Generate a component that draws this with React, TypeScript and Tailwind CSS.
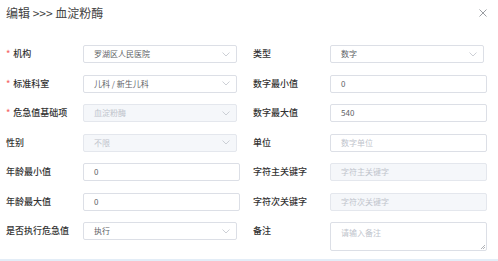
import React from 'react';

const font = { fontFamily: '"Noto Sans CJK SC", "Noto Sans", sans-serif' };

const Chevron: React.FC = () => (
  <svg width="8" height="5" viewBox="0 0 8 5" className="text-[#c0c4cc]">
    <path d="M0.5 0.5 L4 4 L7.5 0.5" fill="none" stroke="currentColor" strokeWidth="0.8" />
  </svg>
);

type Field = {
  label: string;
  required?: boolean;
  kind: 'select' | 'input' | 'textarea';
  value?: string;
  placeholder?: string;
  disabled?: boolean;
};

const Control: React.FC<{ f: Field }> = ({ f }) => {
  const base = 'flex items-center rounded-[2px] border pl-[10px] pr-[6px] text-[8px]';
  const tone = f.disabled ? 'bg-[#f5f7fa] border-[#e4e7ed]' : 'bg-white border-[#dcdfe6]';
  const textCls = f.value ? (f.disabled ? 'text-[#c0c4cc]' : 'text-[#606266]') : 'text-[#c0c4cc]';
  if (f.kind === 'select') {
    return (
      <div className={`${base} ${tone} h-[18px] w-[154px] justify-between`}>
        <span className={textCls}>{f.value}</span>
        <Chevron />
      </div>
    );
  }
  if (f.kind === 'textarea') {
    return (
      <div className={`relative rounded-[2px] border pl-[10px] pt-[4px] text-[8px] ${tone} h-[29px] w-[157px]`}>
        <span className={textCls}>{f.value || f.placeholder}</span>
        <svg width="5" height="5" viewBox="0 0 5 5" className="absolute bottom-[1px] right-[1px]">
          <path d="M1 5 L5 1 M3 5 L5 3" stroke="#909399" strokeWidth="0.7" />
        </svg>
      </div>
    );
  }
  return (
    <div className={`${base} ${tone} h-[18px] w-[157px]`}>
      <span className={textCls}>{f.value || f.placeholder}</span>
    </div>
  );
};

const Row: React.FC<{ f: Field }> = ({ f }) => (
  <div className="flex items-start">
    <div className="flex h-[18px] w-[77px] items-center text-[9px] font-medium text-[#333]">
      {f.required && <span className="mr-[3px] text-[#f56c6c]">*</span>}
      {f.label}
    </div>
    <Control f={f} />
  </div>
);

const left: Field[] = [
  { label: '机构', required: true, kind: 'select', value: '罗湖区人民医院' },
  { label: '标准科室', required: true, kind: 'select', value: '儿科 / 新生儿科' },
  { label: '危急值基础项', required: true, kind: 'select', value: '血淀粉酶', disabled: true },
  { label: '性别', kind: 'select', value: '不限', disabled: true },
  { label: '年龄最小值', kind: 'input', value: '0' },
  { label: '年龄最大值', kind: 'input', value: '0' },
  { label: '是否执行危急值', kind: 'select', value: '执行' },
];

const right: Field[] = [
  { label: '类型', kind: 'select', value: '数字' },
  { label: '数字最小值', kind: 'input', value: '0' },
  { label: '数字最大值', kind: 'input', value: '540' },
  { label: '单位', kind: 'input', placeholder: '数字单位' },
  { label: '字符主关键字', kind: 'input', placeholder: '字符主关键字', disabled: true },
  { label: '字符次关键字', kind: 'input', placeholder: '字符次关键字', disabled: true },
  { label: '备注', kind: 'textarea', placeholder: '请输入备注' },
];

const App: React.FC = () => {
  return (
    <div className="h-[261px] w-full overflow-hidden border-b-2 border-[#e3edf7] bg-white" style={font}>
      <div className="flex items-center justify-between pl-[6px] pr-[11px] pt-[5px]">
        <h1 className="text-[12px] leading-[16px] text-[#444]">编辑 &gt;&gt;&gt; 血淀粉酶</h1>
        <svg width="8" height="8" viewBox="0 0 8 8" className="-mt-[1px]">
          <path d="M0.5 0.5 L7.5 7.5 M7.5 0.5 L0.5 7.5" stroke="#909399" strokeWidth="0.9" />
        </svg>
      </div>
      <div className="mt-[24px] grid grid-cols-[234px_234px] gap-x-[13px] pl-[6px]">
        <div className="flex flex-col gap-y-[11.5px]">
          {left.map((f) => (
            <Row key={f.label} f={f} />
          ))}
        </div>
        <div className="flex flex-col gap-y-[11.5px]">
          {right.map((f) => (
            <Row key={f.label} f={f} />
          ))}
        </div>
      </div>
    </div>
  );
};

export default App;
